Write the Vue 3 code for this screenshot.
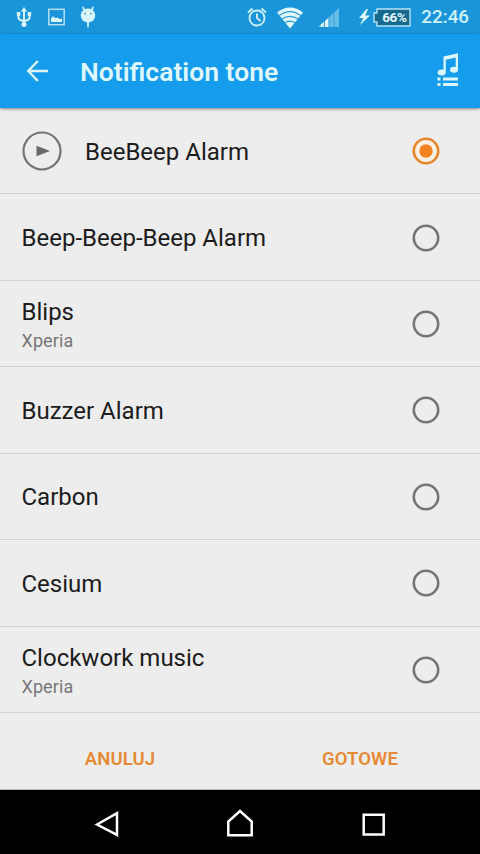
<script setup>
import { ref } from 'vue'

const tones = [
  { name: 'BeeBeep Alarm' },
  { name: 'Beep-Beep-Beep Alarm' },
  { name: 'Blips', artist: 'Xperia' },
  { name: 'Buzzer Alarm' },
  { name: 'Carbon' },
  { name: 'Cesium' },
  { name: 'Clockwork music', artist: 'Xperia' },
]
const selected = ref(0)
</script>

<template>
  <div class="screen">
    <div class="status">
      <div class="status-left">
        <svg width="16" height="22" viewBox="0 0 16 22" fill="none" stroke="#d8f5fb" stroke-width="2">
          <path d="M8 4v14M2.500 8v3.500q0 2 2 2.500L8 15.500M13.500 8v3.500q0 2-2 2.500L8 15.500" />
          <path d="M8 1l3 4.500H5z" fill="#d8f5fb" stroke="none" />
          <circle cx="8" cy="18.500" r="2.500" fill="#d8f5fb" stroke="none" />
          <path d="M.800 6h3.600v4H.800zM11.600 6h3.600v4h-3.600z" fill="#d8f5fb" stroke="none" />
        </svg>
        <svg width="17" height="22" viewBox="0 0 17 22">
          <rect x=".8" y="3.300" width="15.400" height="15.400" fill="none" stroke="#b3dff3" stroke-width="1.500" />
          <path d="M3 16v-3.500l2-2.300 2.500 2 2-.7 2.500 1.700 2-.7V16z" fill="#dcf7fc" />
        </svg>
        <svg width="16" height="22" viewBox="0 0 16 22">
          <path d="M3 1.500l1.500 2.500M13 1.500l-1.500 2.500M8 14v6.500" stroke="#c8edf8" stroke-width="1.800" stroke-linecap="round" />
          <ellipse cx="8" cy="9.500" rx="7.200" ry="7" fill="#d8f5fb" />
          <circle cx="5" cy="7.500" r="1" fill="#56abcc" /><circle cx="11" cy="7.500" r="1" fill="#56abcc" />
        </svg>
      </div>
      <div class="status-right">
        <svg class="alarm" width="20" height="22" viewBox="0 0 20 22" fill="none" stroke="#c9effa" stroke-width="1.900">
          <circle cx="10" cy="12" r="7.500" />
          <path d="M10 7.500V12l3.500 3M1 6.500L5.500 2.500M19 6.500L14.500 2.500" />
        </svg>
        <svg class="wifi" width="28" height="24" viewBox="0 0 28 24">
          <path d="M1 7.500Q14-2.500 27 7.500L14 23.500z" fill="#e1f9fd" />
          <path d="M3 10.700Q14 2.500 25 10.700M5.500 14.300Q14 8.500 22.500 14.300M8.500 17.900Q14 14.300 19.500 17.900" fill="none" stroke="#2f9dd8" stroke-width="1.100" />
        </svg>
        <svg class="signal" width="22" height="22" viewBox="0 0 22 22">
          <path d="M0 21L21 2v19z" fill="#64bce9" />
          <path d="M2.500 21v-2.300l3.500-3V21zM7 21v-6l3.500-3V21z" fill="#dbf7fc" />
          <path d="M6.300 14v7M11 10v11M16 5v16" stroke="#3499d3" stroke-width=".8" />
        </svg>
        <svg class="bolt" width="11" height="18" viewBox="0 0 11 18"><path d="M7.500 1L0 10h4.300L1 17 11 7.500H6.200L9 1z" fill="#dff8fc" /></svg>
        <div class="battery">
          <svg width="38" height="19" viewBox="0 0 38 19"><path d="M4 1h33v17H4v-4H1V5h3z" fill="#176990" stroke="#b5e2f2" stroke-width="1.400" /></svg>
          <span>66%</span>
        </div>
        <span class="clock">22:46</span>
      </div>
    </div>
    <header class="appbar">
      <svg width="24" height="24" viewBox="0 0 24 24" fill="none" stroke="#d9f5fb" stroke-width="2.500"><path d="M23 12H4M12.800 2L3.300 12l9.500 10" /></svg>
      <h1>Notification tone</h1>
      <svg class="music" width="22" height="34" viewBox="0 0 22 34" fill="#dcf8fd">
        <path d="M6.500 3.500L21 .200V17h-2.300V4.500L8.800 6.800V20H6.500z" />
        <ellipse cx="4.700" cy="19.600" rx="4" ry="3" /><ellipse cx="17" cy="16.800" rx="4" ry="3" />
        <path d="M.500 24.500h3v3h-3zM6 24.500h15v3H6zM.500 30h3v3h-3zM6 30h15v3H6z" />
      </svg>
    </header>
    <main>
      <div v-for="(tone, i) in tones" :key="tone.name" class="row" @click="selected = i">
        <svg v-if="selected === i" class="play" width="40" height="40" viewBox="0 0 40 40">
          <circle cx="20" cy="20" r="18.500" fill="none" stroke="#737373" stroke-width="2.200" />
          <path d="M14.500 14.800L28 20l-13.500 5.200z" fill="#686868" />
        </svg>
        <div class="label">
          <div class="name">{{ tone.name }}</div>
          <div v-if="tone.artist" class="artist">{{ tone.artist }}</div>
        </div>
        <svg class="radio" :class="{ on: selected === i }" width="28" height="28" viewBox="0 0 28 28">
          <circle class="ring" cx="14" cy="14" r="12.200" />
          <circle v-if="selected === i" class="dot" cx="14" cy="14" r="6.700" />
        </svg>
      </div>
    </main>
    <footer>
      <button>ANULUJ</button>
      <button>GOTOWE</button>
    </footer>
    <nav>
      <svg width="28" height="30" viewBox="0 0 28 30"><path d="M4 15.500L24 4.200v21.700z" /></svg>
      <svg width="28" height="30" viewBox="0 0 28 30"><path d="M2.300 26.300V12.500L14 2l11.700 10.500v13.800z" /></svg>
      <svg width="28" height="30" viewBox="0 0 28 30"><path d="M4.700 5.700h20v19.800h-20z" /></svg>
    </nav>
  </div>
</template>

<style>
body { margin: 0; }
</style>

<style scoped>
.screen {
  width: 480px;
  height: 854px;
  display: flex;
  flex-direction: column;
  overflow: hidden;
  background: #ededed;
  font-family: Roboto, "Liberation Sans", sans-serif;
}
svg { display: block; flex: none; }
.status {
  height: 34px;
  display: flex;
  justify-content: space-between;
  align-items: center;
  padding: 0 11px 0 16px;
  background: #1b95da;
  box-sizing: border-box;
}
.status-left, .status-right { display: flex; align-items: center; }
.status-left { gap: 15.500px; }
.alarm { margin-right: 9px; }
.wifi { margin-right: 14px; }
.signal { margin-right: 19px; }
.bolt { margin-right: 3px; }
.battery { display: grid; margin-right: 10px; }
.battery > * { grid-area: 1 / 1; }
.battery span {
  padding-left: 4px;
  text-align: center;
  font-size: 13.500px;
  font-weight: 700;
  letter-spacing: -.4px;
  line-height: 19px;
  color: #e2f9fd;
}
.clock { font-size: 18.800px; line-height: 22px; font-weight: 500; color: #cdf2fc; }
.appbar {
  position: relative;
  height: 74px;
  box-sizing: border-box;
  display: flex;
  align-items: center;
  padding: 0 21px 0 25px;
  background: #169cec;
  box-shadow: 0 1px 3px rgba(0, 0, 0, .45);
}
h1 {
  flex: 1;
  margin: 2px 0 0 31px;
  font-size: 26.500px;
  line-height: 30px;
  font-weight: 600;
  color: #ddf8fd;
}
.music { margin-bottom: 2px; }
main { height: 605px; display: flex; flex-direction: column; }
.row {
  flex: 1;
  box-sizing: border-box;
  display: flex;
  align-items: center;
  padding: 0 40px 0 21.500px;
  border-bottom: 1px solid #d1d1d1;
}
.play { margin: 0 23px 0 .5px; }
.label { flex: 1; padding-top: 2px; }
.name { font-size: 24px; line-height: 30px; color: #1c1c1c; }
.artist { font-size: 18px; line-height: 22px; margin-top: 3px; letter-spacing: .1px; color: #777; }
.radio { margin-top: 1px; }
.ring { fill: none; stroke: #757575; stroke-width: 2.600; }
.on .ring { fill: #f8f0e5; stroke: #e5862c; }
.dot { fill: #f58220; }
footer { height: 77px; display: flex; border-bottom: 1px solid #bbb; box-sizing: border-box; }
button {
  flex: 1;
  padding: 15px 0 0;
  border: 0;
  background: none;
  font: 600 18.500px/24px Roboto, "Liberation Sans", sans-serif;
  letter-spacing: .1px;
  color: #e68a35;
}
nav {
  height: 64px;
  display: flex;
  justify-content: center;
  align-items: center;
  gap: 105px;
  padding-top: 4px;
  box-sizing: border-box;
  background: #000;
}
nav svg { fill: none; stroke: #fff; stroke-width: 2.500; }
</style>
